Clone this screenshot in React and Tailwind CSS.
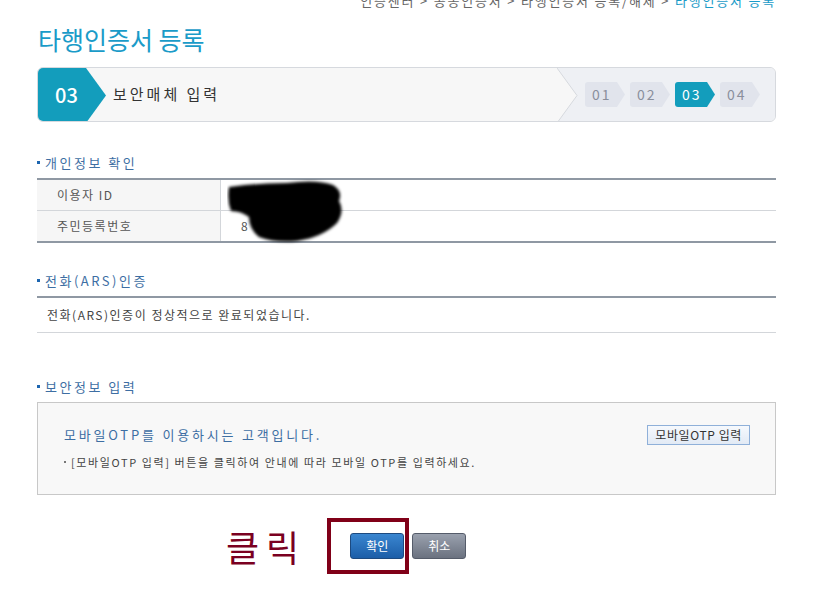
import React from 'react';

const font = { fontFamily: '"Noto Sans CJK KR", "Noto Sans", sans-serif' };

const steps = ['01', '02', '03', '04'];

const SectionTitle = ({ children }) => (
  <div className="flex items-center gap-[5px] text-[13px] text-[#3d6ea3] leading-none h-[16px]">
    <span className="w-[3px] h-[3px] bg-[#1d66b0]" />
    <span className="tracking-[2.5px]">{children}</span>
  </div>
);

const StepPill = ({ n, active }) => (
  <div className="relative h-[25px] w-[41px]">
    <svg className="absolute inset-0" width="41" height="25" viewBox="0 0 41 25">
      <path
        d="M3 0 H32 L40 12.5 L32 25 H3 Q0 25 0 22 V3 Q0 0 3 0 Z"
        fill={active ? '#139dbc' : '#e1e4ec'}
      />
    </svg>
    <span
      className={`absolute left-[7px] top-0 h-[25px] leading-[25px] text-[14px] tracking-[2px] ${
        active ? 'text-white' : 'text-[#8a8f9c]'
      }`}
    >
      {n}
    </span>
  </div>
);

export default function App() {
  return (
    <div style={font} className="w-[820px] h-[593px] bg-white overflow-hidden relative">
      {/* breadcrumb, cut off at top */}
      <div className="absolute right-[44px] top-[-9px] text-[13px] tracking-[1.8px] text-[#666] whitespace-nowrap">
        인증센터 &gt; 공동인증서 &gt; 타행인증서 등록/해제 &gt; <span className="text-[#1a9bc8]">타행인증서 등록</span>
      </div>

      <div className="pl-[37px] pr-[44px] pt-[24px]">
        <h1 className="text-[25px] leading-[30px] text-[#1a9bc8] ml-[1px]">타행인증서 등록</h1>

        {/* step bar */}
        <div className="mt-[13px] h-[55px] rounded-[6px] border border-[#d6d9de] bg-[#f7f7f7] flex relative overflow-hidden">
          <div className="relative w-[70px] h-full">
            <svg className="absolute inset-0" width="70" height="55" viewBox="0 0 70 55">
              <path d="M0 0 H48 L68 27.5 L48 55 H0 Z" fill="#139dbc" />
            </svg>
            <span className="absolute left-[17px] top-0 leading-[53px] text-[20px] text-white font-medium">03</span>
          </div>
          <div className="flex-1 pl-[5px] flex items-center text-[15px] text-[#333] tracking-[3px]">보안매체 입력</div>
          <div className="relative w-[218px] h-full flex items-center">
            <svg className="absolute inset-0" width="218" height="55" viewBox="0 0 218 55">
              <path d="M0 0 H218 V55 H0 L20 27.5 Z" fill="#eef0f4" />
              <path d="M0 0 L20 27.5 L0 55" fill="none" stroke="#d6d9de" />
            </svg>
            <div className="relative flex gap-[4px] pl-[28px]">
              {steps.map((s) => (
                <StepPill key={s} n={s} active={s === '03'} />
              ))}
            </div>
          </div>
        </div>

        {/* 개인정보 확인 */}
        <div className="mt-[32px]">
          <SectionTitle>개인정보 확인</SectionTitle>
          <div className="mt-[8px] border-t-2 border-b-2 border-[#8f98a3] relative">
            <div className="flex h-[31px] border-b border-[#d3d6da] text-[12px]">
              <div className="w-[184px] bg-[#f6f6f6] border-r border-[#d3d6da] pl-[20px] flex items-center text-[#555] tracking-[1.5px]">이용자 ID</div>
              <div className="flex-1 pl-[20px] flex items-center text-[#555]"></div>
            </div>
            <div className="flex h-[30px] text-[12px]">
              <div className="w-[184px] bg-[#f6f6f6] border-r border-[#d3d6da] pl-[20px] flex items-center text-[#555] tracking-[1.5px]">주민등록번호</div>
              <div className="flex-1 pl-[20px] flex items-center text-[#555]">8</div>
            </div>
            <svg className="absolute left-[190px] top-[-1px]" width="130" height="66" viewBox="0 0 130 66">
              <defs>
                <filter id="blur" x="-10%" y="-10%" width="120%" height="120%">
                  <feGaussianBlur stdDeviation="1.6" />
                </filter>
              </defs>
              <path
                d="M2 8 Q30 4 60 4 Q90 0 106 6 Q116 12 112 22 Q118 32 110 44 Q96 58 70 62 Q48 64 32 58 Q22 50 22 38 Q14 32 4 32 Q0 22 2 8 Z"
                fill="#050505"
                filter="url(#blur)"
              />
            </svg>
          </div>
        </div>

        {/* 전화(ARS)인증 */}
        <div className="mt-[29px]">
          <SectionTitle>전화(ARS)인증</SectionTitle>
          <div className="mt-[8px] border-t-2 border-[#8f98a3] border-b border-b-[#d3d6da] h-[37px] pl-[10px] flex items-center text-[12px] text-[#444] tracking-[1.5px]">
            전화(ARS)인증이 정상적으로 완료되었습니다.
          </div>
        </div>

        {/* 보안정보 입력 */}
        <div className="mt-[45px]">
          <SectionTitle>보안정보 입력</SectionTitle>
          <div className="mt-[8px] h-[93px] border border-[#c8c8c8] bg-[#f8f8f8] pl-[26px] pr-[25px] pt-[22px] flex justify-between">
            <div>
              <div className="text-[13px] text-[#3d6ea3] tracking-[2.8px] leading-[20px]">모바일OTP를 이용하시는 고객입니다.</div>
              <div className="mt-[9px] flex items-center gap-[5px] text-[11px] text-[#444] leading-[16px] tracking-[1.6px]">
                <span className="w-[2px] h-[2px] bg-[#777]" />
                [모바일OTP 입력] 버튼을 클릭하여 안내에 따라 모바일 OTP를 입력하세요.
              </div>
            </div>
            <button className="h-[20px] px-[7px] border border-[#8fb0d9] bg-gradient-to-b from-[#f6f9fd] to-[#e2eaf5] text-[12px] text-[#333] leading-[18px] tracking-[0.6px] whitespace-nowrap">
              모바일OTP 입력
            </button>
          </div>
        </div>

        {/* bottom buttons */}
        <div className="mt-[23px] flex items-center">
          <div className="ml-[189px] text-[36px] leading-[40px] text-[#7a0021] tracking-[7px]">클릭</div>
          <div className="ml-[21px] w-[82px] h-[56px] border-4 border-[#800018]" />
          <div className="-ml-[59px] flex gap-[8px]">
            <button className="w-[54px] h-[26px] rounded-[3px] border border-[#1d4a80] bg-gradient-to-b from-[#3a86d0] to-[#1c5ea8] text-white text-[12px]">확인</button>
            <button className="w-[54px] h-[26px] rounded-[3px] border border-[#555c6a] bg-gradient-to-b from-[#9aa1ae] to-[#6b7280] text-white text-[12px]">취소</button>
          </div>
        </div>
      </div>
    </div>
  );
}
